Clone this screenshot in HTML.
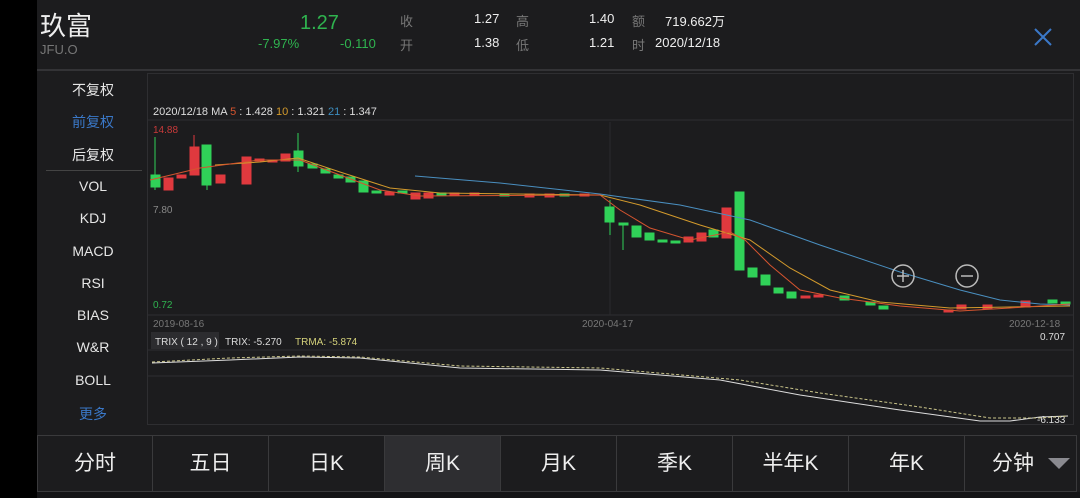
<!DOCTYPE html>
<html><head><meta charset="utf-8"><style>
body{margin:0;width:1080px;height:498px;background:#1c1c1e;position:relative;overflow:hidden;font-family:"Liberation Sans","Noto Sans CJK SC",sans-serif;color:#ddd}
.a{position:absolute;white-space:nowrap}
.side{position:absolute;left:38px;width:110px;text-align:center;font-size:14px;color:#e6e6e6}
.tab{position:absolute;top:436px;height:55px;width:116px;text-align:center;line-height:55px;font-size:21px;color:#eee;border-right:1px solid #3a3a3c;box-sizing:border-box}
</style></head><body>
<div class="a" style="left:0;top:0;width:37px;height:498px;background:#000"></div>
<div class="a" style="left:40px;top:6px;font-size:26px;color:#eee">玖富</div>
<div class="a" style="left:40px;top:42px;font-size:13px;color:#777">JFU.O</div>
<div class="a" style="left:300px;top:12px;font-size:20px;color:#2fb34f">1.27</div>
<div class="a" style="left:258px;top:36px;font-size:13px;color:#2fb34f">-7.97%</div>
<div class="a" style="left:340px;top:36px;font-size:13px;color:#2fb34f">-0.110</div>
<div class="a" style="left:400px;top:11px;font-size:13px;color:#777">收</div>
<div class="a" style="left:400px;top:35px;font-size:13px;color:#777">开</div>
<div class="a" style="left:474px;top:11px;font-size:13px;color:#eee">1.27</div>
<div class="a" style="left:474px;top:35px;font-size:13px;color:#eee">1.38</div>
<div class="a" style="left:516px;top:11px;font-size:13px;color:#777">高</div>
<div class="a" style="left:516px;top:35px;font-size:13px;color:#777">低</div>
<div class="a" style="left:589px;top:11px;font-size:13px;color:#eee">1.40</div>
<div class="a" style="left:589px;top:35px;font-size:13px;color:#eee">1.21</div>
<div class="a" style="left:632px;top:11px;font-size:13px;color:#777">额</div>
<div class="a" style="left:632px;top:35px;font-size:13px;color:#777">时</div>
<div class="a" style="left:665px;top:11px;font-size:13px;color:#eee">719.662万</div>
<div class="a" style="left:655px;top:35px;font-size:13px;color:#eee">2020/12/18</div>
<svg class="a" style="left:1033px;top:27px" width="20" height="20"><path d="M2 2L18 18M18 2L2 18" stroke="#3a78c8" stroke-width="2"/></svg>
<div class="a" style="left:37px;top:69px;width:1043px;height:2px;background:#333336"></div>
<div class="side" style="top:80px">不复权</div>
<div class="side" style="top:112px;color:#3a78c8">前复权</div>
<div class="side" style="top:145px">后复权</div>
<div class="a" style="left:46px;top:170px;width:96px;height:1px;background:#444"></div>
<div class="side" style="top:178px">VOL</div>
<div class="side" style="top:210px">KDJ</div>
<div class="side" style="top:243px">MACD</div>
<div class="side" style="top:275px">RSI</div>
<div class="side" style="top:307px">BIAS</div>
<div class="side" style="top:339px">W&amp;R</div>
<div class="side" style="top:372px">BOLL</div>
<div class="side" style="top:404px;color:#3a78c8">更多</div>
<svg class="a" style="left:0;top:0" width="1080" height="436" font-family="Liberation Sans" font-size="10">
<rect x="147.5" y="73.5" width="926" height="351" fill="none" stroke="#2e2e31"/>
<line x1="148" y1="120" x2="1073" y2="120" stroke="#2e2e31"/>
<line x1="148" y1="315" x2="1073" y2="315" stroke="#2e2e31"/>
<line x1="148" y1="350" x2="1073" y2="350" stroke="#2e2e31"/>
<line x1="148" y1="376" x2="1073" y2="376" stroke="#2e2e31"/>
<line x1="610" y1="122" x2="610" y2="315" stroke="#2a2a2d"/>
<text x="153" y="115" fill="#ddd" font-size="11">2020/12/18  MA <tspan fill="#d5542f">5</tspan> : 1.428 <tspan fill="#d39a2c">10</tspan> : 1.321 <tspan fill="#3d8ec0">21</tspan> : 1.347</text>
<text x="153" y="133" fill="#c83a3a">14.88</text>
<text x="153" y="213" fill="#888">7.80</text>
<text x="153" y="308" fill="#2fb34f">0.72</text>
<text x="153" y="327" fill="#777">2019-08-16</text>
<text x="582" y="327" fill="#777">2020-04-17</text>
<text x="1009" y="327" fill="#777">2020-12-18</text>
<text x="1040" y="340" fill="#ddd">0.707</text>
<text x="1037" y="423" fill="#ddd">-6.133</text>
<rect x="151" y="332" width="68" height="17" fill="#2c2c2f"/>
<text x="155" y="345" fill="#ddd">TRIX ( 12 , 9 )</text>
<text x="225" y="345" fill="#ddd">TRIX: -5.270</text>
<text x="295" y="345" fill="#d4d17a">TRMA: -5.874</text>
<g id="c" stroke-width="1">
<g fill="#30d158" stroke="#30d158">
<line x1="155" y1="137" x2="155" y2="190"/><rect x="151" y="175" width="9" height="12"/>
<line x1="207" y1="145" x2="207" y2="190"/><rect x="202" y="145" width="9" height="40"/>
<line x1="298" y1="133" x2="298" y2="172"/><rect x="294" y="151" width="9" height="15"/>
<rect x="308" y="164" width="9" height="4"/><rect x="321" y="169" width="9" height="4"/><rect x="334" y="175" width="9" height="3"/><rect x="346" y="177" width="9" height="5"/><rect x="359" y="181" width="9" height="11"/><rect x="372" y="191" width="9" height="2"/><rect x="398" y="191" width="9" height="2"/><rect x="437" y="193" width="9" height="2"/><rect x="500" y="194" width="9" height="2"/><rect x="560" y="194" width="9" height="2"/>
<line x1="610" y1="200" x2="610" y2="235"/><rect x="605" y="207" width="9" height="15"/>
<line x1="623" y1="223" x2="623" y2="250"/><rect x="619" y="223" width="9" height="2"/><rect x="632" y="226" width="9" height="11"/><rect x="645" y="233" width="9" height="7"/><rect x="658" y="240" width="9" height="2"/><rect x="671" y="241" width="9" height="2"/><rect x="709" y="230" width="9" height="7"/>
<rect x="735" y="192" width="9" height="78"/><rect x="748" y="268" width="9" height="9"/><rect x="761" y="275" width="9" height="10"/><rect x="774" y="288" width="9" height="5"/><rect x="787" y="292" width="9" height="6"/><rect x="840" y="296" width="9" height="4"/><rect x="866" y="302" width="9" height="3"/><rect x="879" y="306" width="9" height="3"/><rect x="1048" y="300" width="9" height="3"/><rect x="1061" y="302" width="9" height="2"/>
</g>
<g fill="#e0393e" stroke="#e0393e">
<rect x="164" y="178" width="9" height="12"/><rect x="177" y="175" width="9" height="3"/>
<line x1="194" y1="135" x2="194" y2="175"/><rect x="190" y="147" width="9" height="28"/>
<rect x="216" y="175" width="9" height="8"/><rect x="242" y="157" width="9" height="27"/><rect x="255" y="159" width="9" height="2"/><rect x="268" y="160" width="9" height="2"/><rect x="281" y="154" width="9" height="7"/><rect x="385" y="192" width="9" height="3"/><rect x="411" y="193" width="9" height="6"/><rect x="424" y="193" width="9" height="5"/><rect x="450" y="193" width="9" height="2"/><rect x="470" y="193" width="9" height="2"/><rect x="525" y="194" width="9" height="3"/><rect x="545" y="194" width="9" height="3"/><rect x="580" y="194" width="9" height="2"/>
<rect x="684" y="237" width="9" height="5"/><rect x="697" y="233" width="9" height="8"/><rect x="722" y="208" width="9" height="30"/><rect x="801" y="296" width="9" height="2"/><rect x="814" y="295" width="9" height="2"/><rect x="944" y="310" width="9" height="2"/><rect x="957" y="305" width="9" height="4"/><rect x="983" y="305" width="9" height="4"/><rect x="1021" y="301" width="9" height="6"/>
</g></g>
<polyline fill="none" stroke="#4a8fc0" stroke-width="1" points="415,176 500,183 600,194 680,205 750,220 820,245 900,272 960,290 1000,300 1040,304 1070,305"/>
<polyline fill="none" stroke="#d39a2c" stroke-width="1" points="215,165 260,162 298,158 340,172 390,188 440,193 600,195 640,205 700,225 750,240 790,268 830,290 880,302 950,308 1070,306"/>
<polyline fill="none" stroke="#d5542f" stroke-width="1" points="150,180 200,168 260,160 300,160 340,175 380,190 420,196 600,195 620,210 650,228 690,240 730,232 745,240 770,265 800,290 840,298 900,306 960,311 1010,308 1070,304"/>
<circle cx="903" cy="276" r="11" fill="none" stroke="#bbb" stroke-width="1.5"/><path d="M897 276H909M903 270V282" stroke="#bbb" stroke-width="1.5"/>
<circle cx="967" cy="276" r="11" fill="none" stroke="#bbb" stroke-width="1.5"/><path d="M961 276H973" stroke="#bbb" stroke-width="1.5"/>
<polyline fill="none" stroke="#ddd" stroke-width="1" points="152,363 230,360 300,357 360,358 460,368 600,370 720,380 800,395 900,410 980,421 1010,421 1040,417 1068,416"/>
<polyline fill="none" stroke="#c9c48a" stroke-width="1" stroke-dasharray="3,2" points="152,362 230,358 300,356 360,357 460,366 600,368 740,380 820,393 920,407 990,418 1040,418 1068,416"/>
</svg>
<div class="a" style="left:37px;top:435px;width:1040px;height:1px;background:#3a3a3c"></div>
<div class="a" style="left:37px;top:491px;width:1040px;height:1px;background:#3a3a3c"></div>
<div class="a" style="left:37px;top:492px;width:1043px;height:6px;background:#141416"></div>
<div class="tab" style="left:37px;border-left:1px solid #3a3a3c">分时</div>
<div class="tab" style="left:153px">五日</div>
<div class="tab" style="left:269px">日K</div>
<div class="tab" style="left:385px;background:#2e2e31">周K</div>
<div class="tab" style="left:501px">月K</div>
<div class="tab" style="left:617px">季K</div>
<div class="tab" style="left:733px">半年K</div>
<div class="tab" style="left:849px">年K</div>
<div class="tab" style="left:965px;width:112px;text-align:left;padding-left:27px">分钟</div>
<svg class="a" style="left:1048px;top:458px" width="22" height="12"><path d="M0 0H22L11 11Z" fill="#8a8a90"/></svg>
</body></html>
